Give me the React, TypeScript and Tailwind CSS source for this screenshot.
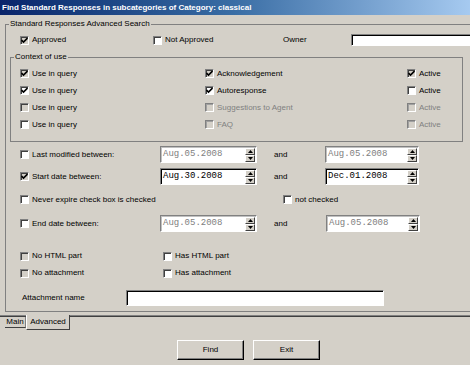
import type { ReactNode } from 'react'

function Tick() {
  return (
    <svg width="7" height="7" viewBox="0 0 7 7" className="block">
      <path d="M0.5 3 L2.5 5 L6.5 1" fill="none" stroke="#000" strokeWidth="1.6" />
    </svg>
  )
}

function Check({ on, grey, off }: { on?: boolean; grey?: boolean; off?: boolean }) {
  const fill = off || grey ? 'bg-[#d4d0c8]' : 'bg-white'
  const inner = off
    ? 'shadow-[inset_1px_1px_0_#a0a0a0]'
    : 'shadow-[inset_1px_1px_0_#404040]'
  return (
    <span
      className={`flex size-[9px] shrink-0 items-center justify-center border border-t-[#808080] border-l-[#808080] border-r-white border-b-white ${fill} ${inner}`}
    >
      {on && <Tick />}
    </span>
  )
}

function Box({
  on,
  grey,
  off,
  children,
}: {
  on?: boolean
  grey?: boolean
  off?: boolean
  children: ReactNode
}) {
  return (
    <span className="flex items-center gap-[3px]">
      <Check on={on} grey={grey} off={off} />
      <span className={off ? 'text-[#808080]' : 'text-black'}>{children}</span>
    </span>
  )
}

function Arrow({ up }: { up?: boolean }) {
  return (
    <svg width="5" height="3" viewBox="0 0 5 3" className="block">
      <path d={up ? 'M2.5 0 L5 3 L0 3 Z' : 'M0 0 L5 0 L2.5 3 Z'} fill="#000" />
    </svg>
  )
}

function DateField({ value, off, w }: { value: string; off?: boolean; w: string }) {
  return (
    <div
      className={`flex h-[17px] ${w} items-center border border-t-[#808080] border-l-[#808080] border-r-white border-b-white bg-white ${
        off ? 'shadow-[inset_1px_1px_0_#c0c0c0]' : 'shadow-[inset_1px_1px_0_#000]'
      }`}
    >
      <span
        className={`flex-1 pl-[2px] font-['Liberation_Mono',monospace] text-[9px] leading-none ${
          off ? 'text-[#808080]' : 'text-black'
        }`}
      >
        {value}
      </span>
      <div className="mr-[1px] flex flex-col">
        <span className="flex h-[7px] w-[10px] items-center justify-center border border-t-white border-l-white border-r-[#404040] border-b-[#404040] bg-[#d4d0c8]">
          <Arrow up />
        </span>
        <span className="flex h-[7px] w-[10px] items-center justify-center border border-t-white border-l-white border-r-[#404040] border-b-[#404040] bg-[#d4d0c8]">
          <Arrow />
        </span>
      </div>
    </div>
  )
}

function WinButton({ children }: { children: ReactNode }) {
  return (
    <button className="flex h-[20px] w-[67px] items-center justify-center border border-t-white border-l-white border-r-black border-b-black bg-[#d4d0c8] shadow-[inset_-1px_-1px_0_#808080]">
      {children}
    </button>
  )
}

export default function App() {
  const contextRows = [
    { q: { on: true, grey: true }, m: { label: 'Acknowledgement', on: true, grey: true }, a: { on: true, grey: true } },
    { q: { on: true }, m: { label: 'Autoresponse', on: true }, a: {} },
    { q: { grey: true }, m: { label: 'Suggestions to Agent', off: true }, a: { off: true } },
    { q: {}, m: { label: 'FAQ', off: true }, a: { off: true } },
  ]

  return (
    <div className="relative h-[365px] w-[470px] overflow-hidden bg-[#d4d0c8] font-['Liberation_Sans',Arial,sans-serif] text-[8px] leading-[10px] text-black">
      <div className="flex h-[15px] items-center bg-linear-to-r from-[#0a246a] via-[#3a6ea5] to-[#a6caf0] pl-[2px] text-[8px] font-bold text-white">
        Find Standard Responses in subcategories of Category: classical
      </div>

      <fieldset className="ml-[5px] mt-[4px] w-[480px] border border-[#808080] pb-[5px]">
        <legend className="ml-[3px] px-[1px]">Standard Responses Advanced Search</legend>

        <div className="mt-[5px] flex h-[12px] items-center pl-[14px]">
          <div className="w-[133px]">
            <Box on grey>Approved</Box>
          </div>
          <div className="w-[130px]">
            <Box>Not Approved</Box>
          </div>
          <div className="w-[68px]">Owner</div>
          <div className="h-[12px] w-[125px] border border-t-[#808080] border-l-[#808080] border-r-white border-b-white bg-white shadow-[inset_1px_1px_0_#000]" />
        </div>

        <fieldset className="ml-[4px] mt-[6px] w-[453px] border border-[#808080] pb-[8px]">
          <legend className="ml-[3px] px-[1px]">Context of use</legend>
          <div className="mt-[3px]">
            {contextRows.map((r, i) => (
              <div key={i} className="flex h-[17px] items-center pl-[9px]">
                <div className="w-[185px]">
                  <Box {...r.q}>Use in query</Box>
                </div>
                <div className="w-[202px]">
                  <Box on={r.m.on} grey={r.m.grey} off={r.m.off}>
                    {r.m.label}
                  </Box>
                </div>
                <Box {...r.a}>Active</Box>
              </div>
            ))}
          </div>
        </fieldset>

        <div className="mt-[4px] flex h-[17px] items-center pl-[14px]">
          <div className="w-[140px]">
            <Box>Last modified between:</Box>
          </div>
          <DateField value="Aug.05.2008" off w="w-[97px]" />
          <div className="ml-[17px] w-[51px]">and</div>
          <DateField value="Aug.05.2008" off w="w-[94px]" />
        </div>

        <div className="mt-[5px] flex h-[17px] items-center pl-[14px]">
          <div className="w-[140px]">
            <Box on grey>Start date between:</Box>
          </div>
          <DateField value="Aug.30.2008" w="w-[97px]" />
          <div className="ml-[17px] w-[51px]">and</div>
          <DateField value="Dec.01.2008" w="w-[94px]" />
        </div>

        <div className="mt-[6px] flex h-[17px] items-center pl-[14px]">
          <div className="w-[263px]">
            <Box>Never expire check box is checked</Box>
          </div>
          <Box>not checked</Box>
        </div>

        <div className="mt-[7px] flex h-[17px] items-center pl-[14px]">
          <div className="w-[140px]">
            <Box>End date between:</Box>
          </div>
          <DateField value="Aug.05.2008" off w="w-[97px]" />
          <div className="ml-[17px] w-[52px]">and</div>
          <DateField value="Aug.05.2008" off w="w-[94px]" />
        </div>

        <div className="mt-[18px] flex h-[12px] items-center pl-[14px]">
          <div className="w-[143px]">
            <Box grey>No HTML part</Box>
          </div>
          <Box>Has HTML part</Box>
        </div>

        <div className="mt-[5px] flex h-[12px] items-center pl-[14px]">
          <div className="w-[143px]">
            <Box grey>No attachment</Box>
          </div>
          <Box>Has attachment</Box>
        </div>

        <div className="mt-[11px] flex h-[16px] items-center pl-[16px]">
          <div className="w-[104px]">Attachment name</div>
          <div className="h-[16px] w-[258px] border border-t-[#808080] border-l-[#808080] border-r-white border-b-white bg-white shadow-[inset_1px_1px_0_#000]" />
        </div>
      </fieldset>

      <div className="h-[4px] border-b border-[#808080] shadow-[0_1px_0_#404040]" />

      <div className="flex items-start pl-[5px]">
        <div className="mt-[1px] flex h-[11px] w-[21px] items-center justify-center border-b border-r border-b-[#404040] border-r-[#808080] bg-[#d4d0c8]">
          Main
        </div>
        <div className="-mt-[1px] flex h-[15px] w-[44px] items-center justify-center border-l border-r border-b border-l-white border-r-[#404040] border-b-[#404040] bg-[#d4d0c8]">
          Advanced
        </div>
      </div>

      <div className="mt-[10px] flex gap-[9px] pl-[177px]">
        <WinButton>Find</WinButton>
        <WinButton>Exit</WinButton>
      </div>
    </div>
  )
}
